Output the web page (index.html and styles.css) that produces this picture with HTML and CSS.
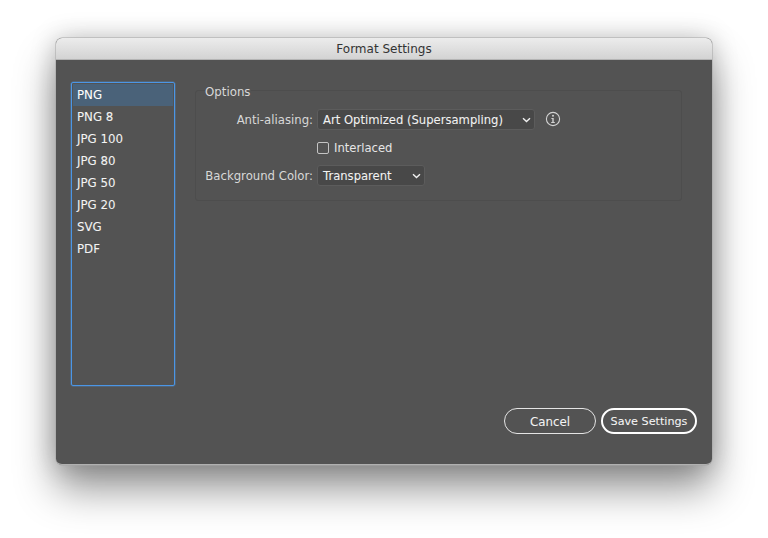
FILE: index.html
```html
<!DOCTYPE html>
<html lang="en">
<head>
<meta charset="utf-8">
<title>Format Settings</title>
<link rel="stylesheet" href="styles.css">
</head>
<body>
<div class="window">
  <div class="titlebar">Format Settings</div>
  <div class="content">
    <div class="main">
      <ul class="list">
        <li class="item selected">PNG</li>
        <li class="item">PNG 8</li>
        <li class="item">JPG 100</li>
        <li class="item">JPG 80</li>
        <li class="item">JPG 50</li>
        <li class="item">JPG 20</li>
        <li class="item">SVG</li>
        <li class="item">PDF</li>
      </ul>
      <fieldset class="options">
        <legend class="legend">Options</legend>
        <div class="row row-aa">
          <span class="label">Anti-aliasing:</span>
          <div class="select select-aa"><span class="select-text">Art Optimized (Supersampling)</span>
            <svg class="chev" width="9" height="6" viewBox="0 0 9 6"><path d="M1 1.2 L4.5 4.6 L8 1.2" fill="none" stroke="#f0f0f0" stroke-width="1.4"/></svg>
          </div>
          <svg class="info" width="16" height="16" viewBox="0 0 16 16">
            <circle cx="8" cy="8" r="6.6" fill="none" stroke="#d2d2d2" stroke-width="1.1"/>
            <circle cx="8" cy="4.7" r="1" fill="#d2d2d2"/>
            <path d="M6.4 6.9 H8.7 V11 H9.8 V12 H6.2 V11 H7.3 V7.9 H6.4 Z" fill="#d2d2d2"/>
          </svg>
        </div>
        <div class="row row-check">
          <span class="check"></span><span class="check-label">Interlaced</span>
        </div>
        <div class="row row-bg">
          <span class="label">Background Color:</span>
          <div class="select select-bg"><span class="select-text">Transparent</span>
            <svg class="chev" width="9" height="6" viewBox="0 0 9 6"><path d="M1 1.2 L4.5 4.6 L8 1.2" fill="none" stroke="#f0f0f0" stroke-width="1.4"/></svg>
          </div>
        </div>
      </fieldset>
    </div>
    <div class="actions">
      <button class="btn btn-cancel">Cancel</button>
      <button class="btn btn-save">Save Settings</button>
    </div>
  </div>
</div>
</body>
</html>
```

FILE: styles.css
```css
html, body { margin: 0; padding: 0; }
body {
  width: 768px;
  height: 538px;
  overflow: hidden;
  background: #fff;
  font-family: "DejaVu Sans", sans-serif;
  font-size: 12px;
  color: #e6e6e6;
}
.window {
  width: 656px;
  height: 427px;
  margin: 38px 0 0 56px;
  box-sizing: border-box;
  background: #535353;
  border-radius: 6px;
  display: flex;
  flex-direction: column;
  overflow: hidden;
  box-shadow: 0 0 0 0.5px #a6a6a6, 0 24px 40px rgba(0,0,0,.42), 0 0 26px rgba(0,0,0,.22);
  border-bottom: 1px solid #b0b0b0;
}
.titlebar {
  height: 22px;
  flex: none;
  box-sizing: border-box;
  background: linear-gradient(#ececec, #d3d3d3);
  border-bottom: 1px solid #b4b4b4;
  color: #333;
  font-size: 12px;
  line-height: 22px;
  text-align: center;
}
.content {
  flex: 1;
  display: flex;
  flex-direction: column;
  padding: 22px 15px 30px 15px;
}
.main {
  display: flex;
  align-items: flex-start;
  flex: 1;
  gap: 20px;
}
.list {
  list-style: none;
  margin: 0;
  padding: 1px;
  width: 104px;
  height: 304px;
  box-sizing: border-box;
  border: 1px solid #4b96e6;
  box-shadow: 0 0 0 0.5px rgba(75,150,230,.5);
  border-radius: 2px;
  flex: none;
}
.item {
  height: 22px;
  line-height: 22px;
  padding-left: 4px;
  color: #f4f4f4;
  font-size: 11.8px;
  -webkit-text-stroke: 0.06px #f4f4f4;
}
.selected {
  background: #4a6279;
  color: #fff;
}
.options {
  margin: -1px 0 0;
  padding: 0 0 0 9px;
  width: 487px;
  height: 120px;
  box-sizing: border-box;
  border: 1px solid #4d4d4d;
  border-radius: 3px;
  min-width: 0;
}
.legend {
  padding: 4px 0 0;
  font-size: 11.8px;
  line-height: 14px;
  color: #d8d8d8;
}
.row {
  display: flex;
  align-items: center;
  font-size: 11.6px;
}
.row-aa { margin-top: 10px; height: 21px; }
.row-check { margin-top: 11px; height: 14px; padding-left: 112px; }
.row-bg { margin-top: 10px; height: 21px; }
.label {
  width: 108px;
  flex: none;
  text-align: right;
  color: #d8d8d8;
  font-size: 11.7px;
  padding-top: 1px;
  white-space: nowrap;
}
.select {
  margin-left: 4px;
  height: 21px;
  box-sizing: border-box;
  background: #484848;
  border: 1px solid #5c5c5c;
  border-radius: 3px;
  display: flex;
  align-items: center;
  justify-content: space-between;
  padding: 0 3px 0 5px;
  color: #f2f2f2;
  white-space: nowrap;
}
.select-text {
  padding-top: 1px;
  -webkit-text-stroke: 0.06px #f2f2f2;
}
.select-aa { width: 218px; }
.select-bg { width: 108px; }
.chev { flex: none; }
.info { margin-left: 10px; flex: none; margin-top: -1px; }
.check {
  width: 12px;
  height: 12px;
  box-sizing: border-box;
  border: 1px solid #c4c4c4;
  border-radius: 2px;
  flex: none;
}
.check-label { margin-left: 5px; color: #e6e6e6; }
.actions {
  display: flex;
  justify-content: flex-end;
  gap: 5px;
}
.btn {
  height: 26px;
  box-sizing: border-box;
  background: transparent;
  border-radius: 13px;
  color: #f4f4f4;
  font-family: inherit;
  padding: 1px 0 0;
  -webkit-text-stroke: 0.06px #f4f4f4;
}
.btn-cancel { width: 92px; border: 1px solid #e4e4e4; font-size: 11.8px; }
.btn-save { width: 96px; border: 2px solid #fff; font-size: 11.2px; }
```
